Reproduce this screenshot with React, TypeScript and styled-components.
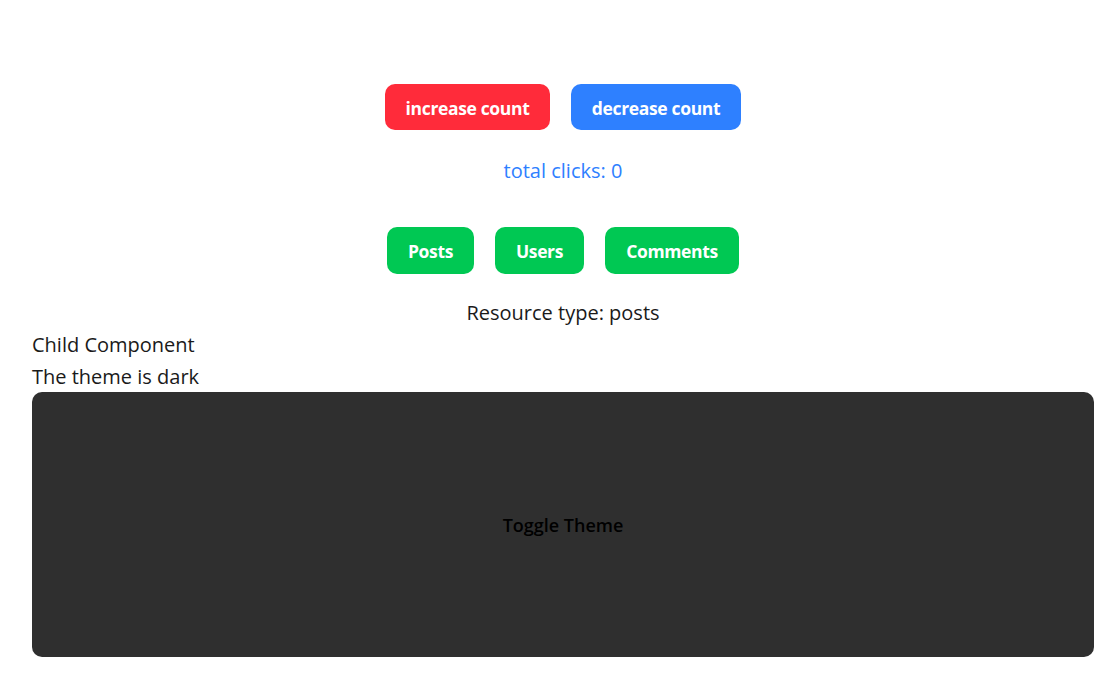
import React, { useState } from "react";
import styled, { createGlobalStyle } from "styled-components";

const Global = createGlobalStyle`
  html, body { margin: 0; padding: 0; background: #ffffff; }
  body { font-family: "Open Sans", "Noto Sans", sans-serif; color: #1a1a1a; }
`;

const Page = styled.div`
  display: flex;
  flex-direction: column;
  padding: 84px 23px 0 32px;
`;

const ButtonRow = styled.div<{ $mt?: number }>`
  display: flex;
  justify-content: center;
  gap: 21px;
  margin-top: ${(p) => p.$mt ?? 0}px;
`;

const ActionButton = styled.button<{ $bg: string; $w: number; $h: number }>`
  width: ${(p) => p.$w}px;
  height: ${(p) => p.$h}px;
  border: none;
  border-radius: 10px;
  background: ${(p) => p.$bg};
  color: #ffffff;
  font-family: "Open Sans", "Noto Sans", sans-serif;
  font-weight: 700;
  font-size: 17.5px;
  letter-spacing: -0.35px;
  cursor: pointer;
  padding: 1px 0 0;
`;

const Line = styled.div<{ $center?: boolean; $color?: string; $mt?: number }>`
  height: 32px;
  line-height: 34px;
  font-size: 20px;
  text-align: ${(p) => (p.$center ? "center" : "left")};
  color: ${(p) => p.$color ?? "#1a1a1a"};
  margin-top: ${(p) => p.$mt ?? 0}px;
`;

const ThemeBox = styled.button<{ $dark: boolean }>`
  height: 265px;
  width: 100%;
  border: none;
  border-radius: 10px;
  background: ${(p) => (p.$dark ? "#2f2f2f" : "#f0f0f0")};
  color: #000000;
  font-family: "Open Sans", "Noto Sans", sans-serif;
  font-weight: 600;
  font-size: 18px;
  cursor: pointer;
`;

export default function App() {
  const [count, setCount] = useState(0);
  const [resource, setResource] = useState("posts");
  const [dark, setDark] = useState(true);
  return (
    <Page>
      <Global />
      <ButtonRow>
        <ActionButton $bg="#ff2b3a" $w={165} $h={46} onClick={() => setCount((c) => c + 1)}>
          increase count
        </ActionButton>
        <ActionButton $bg="#2e80ff" $w={170} $h={46} onClick={() => setCount((c) => c - 1)}>
          decrease count
        </ActionButton>
      </ButtonRow>
      <Line $center $color="#2e80ff" $mt={24}>
        total clicks: {count}
      </Line>
      <ButtonRow $mt={41}>
        <ActionButton $bg="#00c853" $w={87} $h={47} onClick={() => setResource("posts")}>
          Posts
        </ActionButton>
        <ActionButton $bg="#00c853" $w={89} $h={47} onClick={() => setResource("users")}>
          Users
        </ActionButton>
        <ActionButton $bg="#00c853" $w={134} $h={47} onClick={() => setResource("comments")}>
          Comments
        </ActionButton>
      </ButtonRow>
      <Line $center $mt={22}>
        Resource type: {resource}
      </Line>
      <Line>Child Component</Line>
      <Line>The theme is {dark ? "dark" : "light"}</Line>
      <ThemeBox $dark={dark} onClick={() => setDark((d) => !d)}>
        Toggle Theme
      </ThemeBox>
    </Page>
  );
}
